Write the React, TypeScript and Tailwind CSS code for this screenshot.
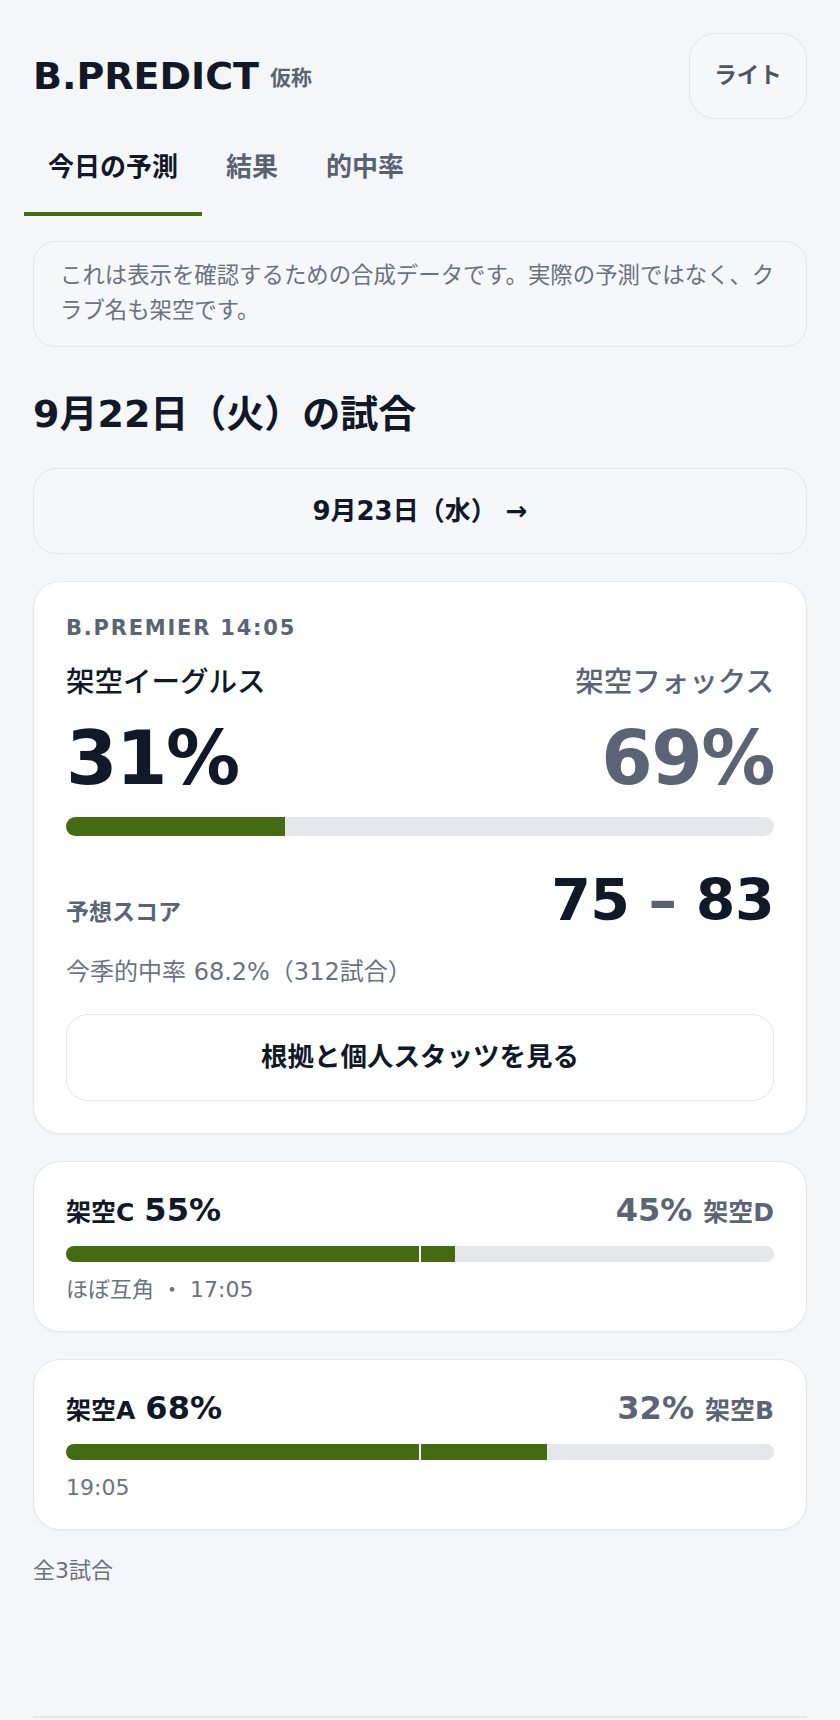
import React from "react";

const GREEN = "bg-[#446b12]";

function SmallCard({
  left,
  leftPct,
  right,
  rightPct,
  pct,
  sub,
}: {
  left: string;
  leftPct: string;
  right: string;
  rightPct: string;
  pct: number;
  sub: string;
}) {
  return (
    <div className="mt-[27px] rounded-[27px] border border-[#e5e7eb] bg-white px-[32px] pt-[32px] pb-[24px] shadow-[0_1px_2px_rgba(0,0,0,0.04)]">
      <div className="flex items-baseline justify-between leading-none">
        <div className="flex items-baseline gap-[10px] text-[#111827]">
          <span className="text-[25px] font-bold">{left}</span>
          <span className="text-[32px] font-bold">{leftPct}</span>
        </div>
        <div className="flex items-baseline gap-[11px] text-[#5b6475]">
          <span className="text-[32px] font-bold">{rightPct}</span>
          <span className="text-[25px] font-bold">{right}</span>
        </div>
      </div>
      <div className="relative mt-[20px] h-[16px] overflow-hidden rounded-full bg-[#e5e7eb]">
        <div className={`h-full ${GREEN}`} style={{ width: `${pct}%` }} />
        <div className="absolute top-0 bottom-0 left-1/2 -ml-[1px] w-[2px] bg-white" />
      </div>
      <div className="mt-[10px] text-[22px] leading-[35px] text-[#6b7280]">{sub}</div>
    </div>
  );
}

export default function App() {
  return (
    <div className="min-h-screen bg-[#f4f6f8] font-['DejaVu_Sans','Noto_Sans_CJK_JP',sans-serif] text-[#111827]">
      <div className="px-[33px] pt-[33px] pb-[8px]">
        <header className="flex h-[86px] items-center justify-between">
          <div className="flex items-center gap-[11px]">
            <h1 className="text-[38px] leading-[48px] font-bold text-[#111827]">B.PREDICT</h1>
            <span className="mt-[4px] text-[21px] leading-[28px] font-bold text-[#5b6475]">仮称</span>
          </div>
          <button className="h-[86px] w-[118px] rounded-[26px] border border-[#e3e6ea] bg-[#f5f7f9] text-[22.5px] font-bold text-[#4b5563]">
            ライト
          </button>
        </header>

        <nav className="-ml-[9px] flex">
          <div className="border-b-4 border-[#446b12] px-[24px] pt-[35px] pb-[32px] text-[26px] leading-[26px] font-bold text-[#111827]">
            今日の予測
          </div>
          <div className="border-b-4 border-transparent px-[24px] pt-[35px] pb-[32px] text-[26px] leading-[26px] font-bold text-[#5a6272]">
            結果
          </div>
          <div className="border-b-4 border-transparent px-[24px] pt-[35px] pb-[32px] text-[26px] leading-[26px] font-bold text-[#5a6272]">
            的中率
          </div>
        </nav>

        <div className="mt-[25px] rounded-[22px] border border-[#e3e6ea] bg-[#f5f7f9] px-[26px] pt-[16px] pb-[18px] text-[22.4px] leading-[35px] text-[#6b7280]">
          これは表示を確認するための合成データです。実際の予測ではなく、クラブ名も架空です。
        </div>

        <h2 className="mt-[43px] text-[38px] leading-[49px] font-bold text-[#111827]">9月22日（火）の試合</h2>

        <button className="mt-[29px] flex h-[86px] w-full items-center justify-center rounded-[24px] border border-[#e3e6ea] bg-[#f5f7f9] text-[26px] font-bold text-[#111827]">
          9月23日（水） →
        </button>

        <div className="mt-[27px] rounded-[27px] border border-[#e5e7eb] bg-white px-[32px] pt-[32px] pb-[32px] shadow-[0_1px_3px_rgba(0,0,0,0.05)]">
          <div className="text-[21px] leading-[28px] font-bold tracking-[0.085em] text-[#5b6475]">B.PREMIER 14:05</div>
          <div className="mt-[23px] flex justify-between text-[28.5px] leading-[36px] font-medium">
            <span className="text-[#111827]">架空イーグルス</span>
            <span className="text-[#5b6475]">架空フォックス</span>
          </div>
          <div className="mt-[19px] flex items-baseline justify-between text-[74px] leading-[76px] font-bold tracking-[-0.02em]">
            <span className="text-[#111827]">31%</span>
            <span className="text-[#5b6475]">69%</span>
          </div>
          <div className="mt-[21px] h-[19px] overflow-hidden rounded-full bg-[#e5e7eb]">
            <div className={`h-full ${GREEN}`} style={{ width: "31%" }} />
          </div>
          <div className="mt-[36px] flex items-baseline justify-between">
            <span className="text-[23px] font-bold text-[#5b6475]">予想スコア</span>
            <span className="text-[57px] leading-[57px] font-bold tracking-[-0.01em] text-[#111827]">
              75 <span className="text-[#5b6475]">–</span> 83
            </span>
          </div>
          <div className="mt-[25px] text-[24px] leading-[35px] text-[#6b7280]">今季的中率 68.2%（312試合）</div>
          <button className="mt-[24px] flex h-[87px] w-full items-center justify-center rounded-[22px] border border-[#e3e6ea] bg-white text-[26.5px] font-bold text-[#111827]">
            根拠と個人スタッツを見る
          </button>
        </div>

        <SmallCard left="架空C" leftPct="55%" right="架空D" rightPct="45%" pct={55} sub="ほぼ互角 ・ 17:05" />
        <SmallCard left="架空A" leftPct="68%" right="架空B" rightPct="32%" pct={68} sub="19:05" />

        <div className="mt-[24px] text-[22px] leading-[33px] text-[#6b7280]">全3試合</div>

        <div className="mt-[129px] border-t-2 border-[#e5e7eb]" />
      </div>
    </div>
  );
}
